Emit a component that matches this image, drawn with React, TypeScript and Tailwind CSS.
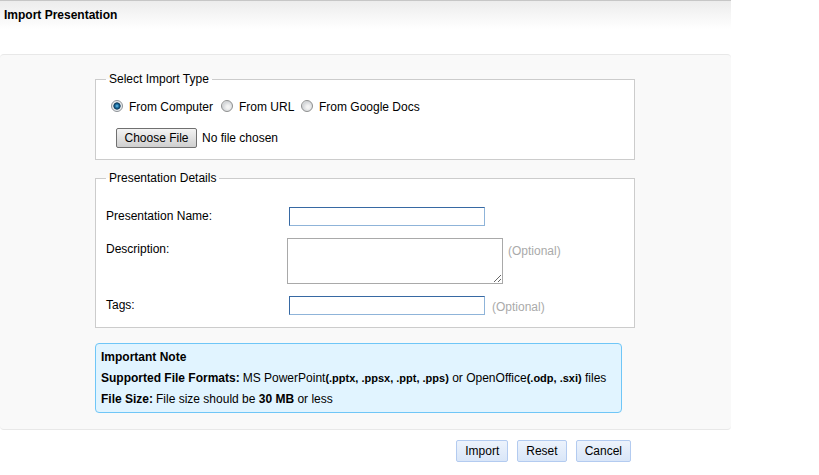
import { useState } from "react";

const IMPORT_TYPES = [
  { value: "computer", label: "From Computer" },
  { value: "url", label: "From URL" },
  { value: "google", label: "From Google Docs" },
];

const radioClass =
  "mb-0.5 h-3 w-3 shrink-0 appearance-none rounded-full border border-[#8e8f8f] bg-[radial-gradient(circle_at_60%_60%,#f4f4f4_15%,#d0d3d6_65%,#f4f4f4_75%)] checked:border-[#8e9297] checked:bg-[radial-gradient(circle_at_50%_50%,#5fb4dc_5%,#1b6ea3_25%,#0b3654_46%,#e8ebee_56%)]";

const textInputClass =
  "ml-0.5 h-[19px] w-[196px] border border-t-[#3769a3] border-r-[#8fb4d9] border-b-[#8fb4d9] border-l-[#3769a3] bg-white px-1 outline-none";

const buttonClass =
  "h-[22px] rounded-xs border border-[#b3cbf0] bg-linear-to-b from-[#edf3fc] to-[#d9e6f8] px-2 leading-4";

function ImportType() {
  const [type, setType] = useState("computer");

  return (
    <fieldset className="border border-[#cccccc] bg-white px-2.5 pb-[11px]">
      <legend className="px-[3px]">Select Import Type</legend>
      <div className="mt-3 grid grid-cols-[110px_80px_1fr] pl-[5px]">
        {IMPORT_TYPES.map((item) => (
          <label key={item.value} className="flex items-center gap-1.5">
            <input
              type="radio"
              name="importType"
              value={item.value}
              checked={type === item.value}
              onChange={() => setType(item.value)}
              className={radioClass}
            />
            {item.label}
          </label>
        ))}
      </div>
      <input
        type="file"
        aria-label="Presentation file"
        className="mt-[13px] ml-2.5 block h-5 w-80 leading-4 file:mr-[5px] file:h-5 file:w-[81px] file:rounded-xs file:border file:border-solid file:border-[#707070] file:bg-linear-to-b file:from-[#f4f4f4] file:to-[#cfcfcf] file:p-0 file:text-center file:leading-4"
      />
    </fieldset>
  );
}

function PresentationDetails() {
  return (
    <fieldset className="mt-2.5 border border-[#cccccc] bg-white px-2.5 pb-3">
      <legend className="px-[3px]">Presentation Details</legend>
      <div className="mt-[21px] grid grid-cols-[181px_1fr] gap-y-3">
        <label htmlFor="name" className="pt-px">
          Presentation Name:
        </label>
        <div>
          <input id="name" type="text" className={`block ${textInputClass}`} />
        </div>

        <label htmlFor="description" className="pt-[3px]">
          Description:
        </label>
        <div className="flex items-start gap-[5px]">
          <textarea
            id="description"
            className="block h-[46px] w-[216px] border border-[#a9a9a9] bg-white px-1 outline-none"
          />
          <span className="pt-[5px] text-[#aaaaaa]">(Optional)</span>
        </div>

        <label htmlFor="tags" className="pt-px">
          Tags:
        </label>
        <div className="flex items-center gap-[7px]">
          <input id="tags" type="text" className={textInputClass} />
          <span className="pt-0.5 text-[#aaaaaa]">(Optional)</span>
        </div>
      </div>
    </fieldset>
  );
}

function ImportantNote() {
  return (
    <div className="mt-[15px] mr-[13px] flex flex-col gap-[5px] rounded-sm border border-[#6fc6f7] bg-[#e1f4ff] px-[5px] py-[5px]">
      <h2 className="font-bold">Important Note</h2>
      <p>
        <b className="mr-[3px]">Supported File Formats:</b>
        MS PowerPoint<b className="text-[11px]">(.pptx, .ppsx, .ppt, .pps)</b>{" "}
        or OpenOffice
        <b className="text-[11px]">(.odp, .sxi)</b> files
      </p>
      <p>
        <b className="mr-[3px]">File Size:</b>
        File size should be <b>30 MB</b> or less
      </p>
    </div>
  );
}

export default function App() {
  return (
    <form className="w-full max-w-[731px] bg-white font-['Liberation_Sans',Arial,sans-serif] text-xs leading-4 text-black">
      <header className="h-[54px] border-t border-[#c6c6c6] bg-[linear-gradient(#ececec,#ffffff_28px)] px-1 pt-1.5">
        <h1 className="font-bold">Import Presentation</h1>
      </header>

      <main className="rounded-sm border-y border-[#e8e8e8] bg-[#f9f9f9] pt-4 pr-24 pb-4 pl-[95px]">
        <ImportType />
        <PresentationDetails />
        <ImportantNote />
      </main>

      <div className="mt-2.5 mr-[100px] flex justify-end gap-[9px]">
        <button type="button" className={buttonClass}>
          Import
        </button>
        <button type="reset" className={buttonClass}>
          Reset
        </button>
        <button type="button" className={buttonClass}>
          Cancel
        </button>
      </div>
    </form>
  );
}
